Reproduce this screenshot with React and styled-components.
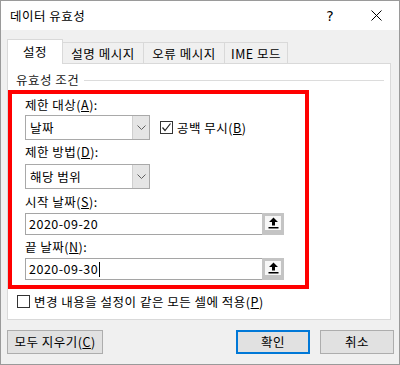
import React from 'react'
import styled, { createGlobalStyle } from 'styled-components'

const GlobalStyle = createGlobalStyle`
  * { box-sizing: border-box; }
  body {
    margin: 0;
    font-family: "Noto Sans CJK KR", "Noto Sans", sans-serif;
    font-size: 12.5px;
    letter-spacing: 0.5px;
    color: #000;
    background: #fff;
  }
`;

const Window = styled.div`
  width: 400px;
  height: 365px;
  border: 1px solid #9a9a9a;
  background: #f0f0f0;
  display: flex;
  flex-direction: column;
`;

const TitleBar = styled.div`
  height: 29px;
  background: #fff;
  display: flex;
  align-items: center;
  padding-left: 9px;
`;

const Title = styled.div`
  flex: 1;
  line-height: 16px;
`;

const TitleButton = styled.div`
  width: 46px;
  height: 29px;
  display: flex;
  align-items: center;
  justify-content: center;
  font-size: 14px;
  font-family: "DejaVu Sans", sans-serif;
  letter-spacing: 0;
`;

const Body = styled.div`
  flex: 1;
  padding: 9px 6px 0 6px;
  display: flex;
  flex-direction: column;
`;

const TabRow = styled.div`
  height: 24px;
  display: flex;
  align-items: flex-end;
`;

const Tab = styled.div`
  position: relative;
  width: ${({ w }) => w}px;
  height: ${({ active }) => (active ? 25 : 21)}px;
  margin-bottom: ${({ active }) => (active ? -1 : 0)}px;
  z-index: ${({ active }) => (active ? 1 : 0)};
  background: ${({ active }) => (active ? '#fff' : '#f0f0f0')};
  border: 1px solid #d9d9d9;
  border-bottom: none;
  border-left: ${({ first }) => (first ? '1px solid #d9d9d9' : 'none')};
  display: flex;
  align-items: center;
  justify-content: center;
  line-height: 16px;
  white-space: nowrap;
  padding-top: ${({ active }) => (active ? 0 : 1)}px;
`;

const Panel = styled.div`
  width: 384px;
  background: #fff;
  border: 1px solid #d9d9d9;
  padding-bottom: 11px;
  display: flex;
  flex-direction: column;
`;

const GroupHeader = styled.div`
  margin-top: 8px;
  margin-bottom: 2px;
  height: 16px;
  padding-left: 8px;
  padding-right: 6px;
  display: flex;
  align-items: center;
  line-height: 16px;
  color: #1a1a1a;
`;

const GroupLine = styled.div`
  flex: 1;
  height: 1px;
  margin-left: 5px;
  margin-top: 1px;
  background: #dcdcdc;
`;

const Highlight = styled.div`
  width: 301px;
  border: 4px solid #ff0000;
  padding: 3px 0 5px 13px;
  display: flex;
  flex-direction: column;
`;

const FieldLabel = styled.div`
  height: 16px;
  line-height: 16px;
  margin-top: ${({ top }) => top || 0}px;
  margin-bottom: ${({ bottom }) => bottom || 0}px;
`;

const Row = styled.div`
  display: flex;
  align-items: center;
  gap: 10px;
`;

const Combo = styled.div`
  width: 125px;
  height: 25px;
  border: 1px solid #a9a9a9;
  background: #fff;
  display: flex;
`;

const ComboText = styled.div`
  flex: 1;
  padding-left: 4px;
  display: flex;
  align-items: center;
  line-height: 16px;
`;

const ComboArrow = styled.div`
  width: 17px;
  background: #e5e5e5;
  border-left: 1px solid #cfcfcf;
  display: flex;
  align-items: center;
  justify-content: center;
`;

const Check = styled.div`
  display: flex;
  align-items: center;
  gap: 4px;
  margin-left: ${({ left }) => left || 0}px;
  margin-top: ${({ top }) => top || 0}px;
  height: 13px;
`;

const CheckBox = styled.div`
  width: 13px;
  height: 13px;
  border: 1px solid #333;
  background: #fff;
  display: flex;
  align-items: center;
  justify-content: center;
  flex-shrink: 0;
`;

const CheckLabel = styled.span`
  line-height: 16px;
  white-space: nowrap;
`;

const Input = styled.div`
  width: 259px;
  height: 22px;
  border: 1px solid #a5a5a5;
  background: #fff;
  display: flex;
`;

const InputText = styled.div`
  flex: 1;
  padding-left: 3px;
  display: flex;
  align-items: center;
  line-height: 16px;
`;

const Caret = styled.span`
  display: inline-block;
  width: 1px;
  height: 15px;
  background: #000;
  margin-left: 1px;
`;

const RefButton = styled.div`
  width: 22px;
  margin: -1px -1px -1px 0;
  border-style: solid;
  border-color: #c4c4c4;
  border-width: 3px 3px 5px 3px;
  background: #f7f7f7;
  display: flex;
  align-items: center;
  justify-content: center;
`;

const ButtonRow = styled.div`
  margin-top: 10px;
  display: flex;
  justify-content: space-between;
`;

const ButtonGroup = styled.div`
  display: flex;
  gap: 10px;
  margin-right: -1px;
`;

const Button = styled.div`
  width: ${({ w }) => w || 74}px;
  height: 24px;
  background: #e1e1e1;
  border: ${({ primary }) => (primary ? '2px solid #0078d7' : '1px solid #adadad')};
  display: flex;
  align-items: center;
  justify-content: center;
  line-height: 16px;
  white-space: nowrap;
`;

const Chevron = () => (
  <svg width="9" height="5" viewBox="0 0 9 5">
    <polyline points="0.5,0.5 4.5,4.5 8.5,0.5" fill="none" stroke="#606060" strokeWidth="1" />
  </svg>
);

const Tick = () => (
  <svg width="11" height="11" viewBox="0 0 11 11">
    <polyline points="1.5,5.5 4,8.5 9.5,1.5" fill="none" stroke="#222" strokeWidth="1.2" />
  </svg>
);

const UpArrow = () => (
  <svg width="11" height="12" viewBox="0 0 11 12">
    <path d="M5.5 0.5 L10 5 H7 V8.5 H4 V5 H1 Z" fill="#000" />
    <rect x="0.5" y="10" width="10" height="1.5" fill="#000" />
  </svg>
);

const CloseIcon = () => (
  <svg width="11" height="11" viewBox="0 0 11 11">
    <path d="M0.5 0.5 L10.5 10.5 M10.5 0.5 L0.5 10.5" stroke="#000" strokeWidth="1" />
  </svg>
);

const App = () => {
  return (
    <>
      <GlobalStyle />
      <Window>
        <TitleBar>
          <Title>데이터 유효성</Title>
          <TitleButton>?</TitleButton>
          <TitleButton><CloseIcon /></TitleButton>
        </TitleBar>
        <Body>
          <TabRow>
            <Tab w={56} active first>설정</Tab>
            <Tab w={81}>설명 메시지</Tab>
            <Tab w={81}>오류 메시지</Tab>
            <Tab w={63}>IME 모드</Tab>
          </TabRow>
          <Panel>
            <GroupHeader>
              유효성 조건
              <GroupLine />
            </GroupHeader>
            <Highlight>
              <FieldLabel bottom={2}>제한 대상(<u>A</u>):</FieldLabel>
              <Row>
                <Combo>
                  <ComboText>날짜</ComboText>
                  <ComboArrow><Chevron /></ComboArrow>
                </Combo>
                <Check>
                  <CheckBox><Tick /></CheckBox>
                  <CheckLabel>공백 무시(<u>B</u>)</CheckLabel>
                </Check>
              </Row>
              <FieldLabel top={4} bottom={4}>제한 방법(<u>D</u>):</FieldLabel>
              <Combo>
                <ComboText>해당 범위</ComboText>
                <ComboArrow><Chevron /></ComboArrow>
              </Combo>
              <FieldLabel top={5} bottom={3}>시작 날짜(<u>S</u>):</FieldLabel>
              <Input>
                <InputText>2020-09-20</InputText>
                <RefButton><UpArrow /></RefButton>
              </Input>
              <FieldLabel top={4} bottom={3}>끝 날짜(<u>N</u>):</FieldLabel>
              <Input>
                <InputText>2020-09-30<Caret /></InputText>
                <RefButton><UpArrow /></RefButton>
              </Input>
            </Highlight>
            <Check left={9} top={6}>
              <CheckBox />
              <CheckLabel>변경 내용을 설정이 같은 모든 셀에 적용(<u>P</u>)</CheckLabel>
            </Check>
          </Panel>
          <ButtonRow>
            <Button w={96}>모두 지우기(<u>C</u>)</Button>
            <ButtonGroup>
              <Button primary>확인</Button>
              <Button>취소</Button>
            </ButtonGroup>
          </ButtonRow>
        </Body>
      </Window>
    </>
  )
}

export default App
